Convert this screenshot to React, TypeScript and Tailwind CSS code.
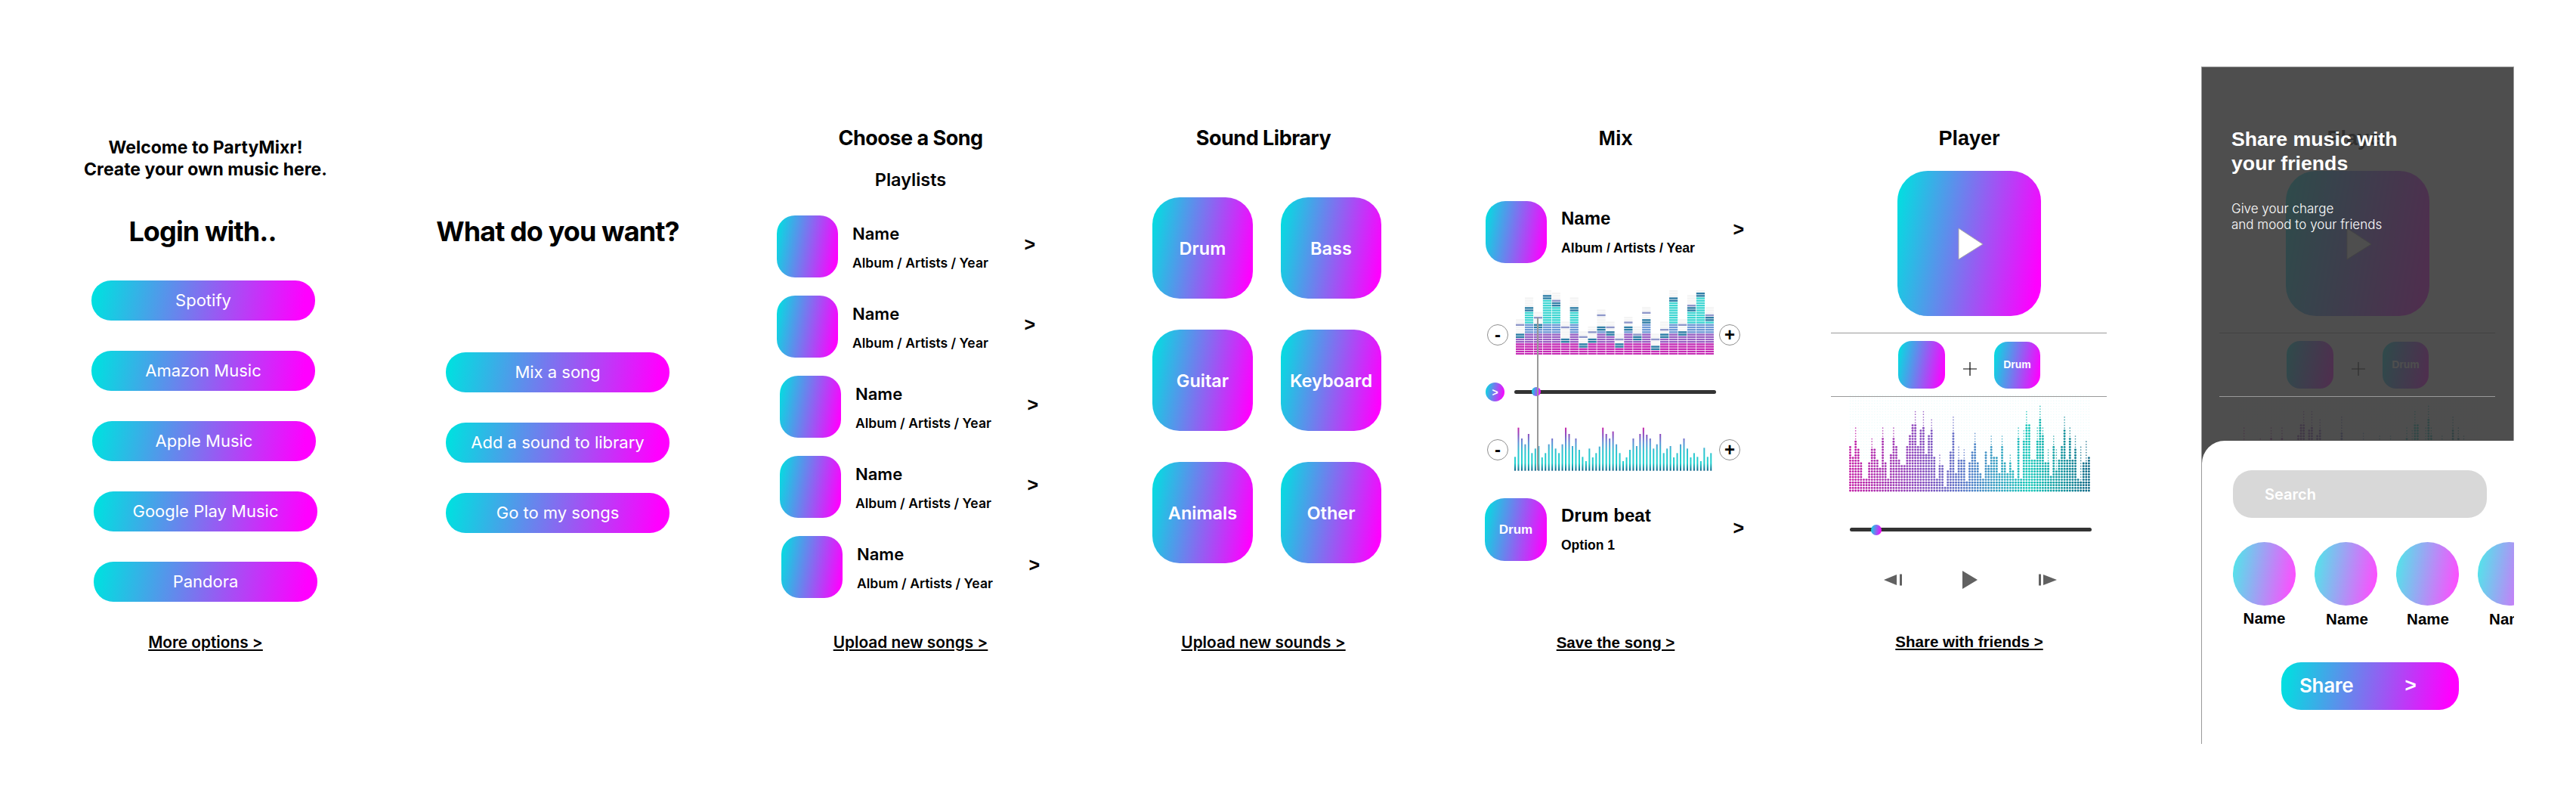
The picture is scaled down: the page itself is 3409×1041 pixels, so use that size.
import React from 'react';

// Shared brand gradient
const grad = 'bg-linear-[100deg] from-[#00e0e0] from-[2%] to-[#ff00ff] to-[94%]';
const helv = "font-['Liberation_Sans',Arial,sans-serif]";

const LoginButton = ({ label, left, top }: { label: string; left: string; top: string }) => (
  <div className={`${left} ${top} ${grad} flex h-[53px] w-[296px] items-center justify-center self-start rounded-[26px] text-[22px] text-white`}>
    {label}
  </div>
);

const FootLink = ({ label, top, cls = 'text-[20.8px] font-semibold' }: { label: string; top: string; cls?: string }) => (
  <div className={`${top} h-[24px] leading-[24px] underline underline-offset-2 ${cls}`}>{label}</div>
);

const Title = ({ label }: { label: string }) => (
  <h1 className="mt-[166px] h-[34px] text-[27px] leading-[34px] font-bold tracking-[-0.5px]">{label}</h1>
);

const Arrow = ({ cls = '' }: { cls?: string }) => (
  <span className={`${helv} text-[25px] leading-none font-bold ${cls}`}>&gt;</span>
);

// One song row of the playlist
const SongRow = ({ left, top }: { left: string; top: string }) => (
  <div className={`${left} ${top} flex h-[82px] w-[342px] self-start`}>
    <div className={`${grad} h-[82px] w-[81px] shrink-0 rounded-[24px]`} />
    <div className="ml-[19px] pt-[10px]">
      <div className="h-[28px] text-[22px] leading-[28px] font-semibold">Name</div>
      <div className="mt-[15px] h-[20px] text-[17.5px] leading-[20px] font-semibold whitespace-nowrap">Album / Artists / Year</div>
    </div>
    <Arrow cls="ml-auto mt-[26px]" />
  </div>
);

const SoundTile = ({ label }: { label: string }) => (
  <div className={`${grad} flex h-[134px] w-[133px] items-center justify-center rounded-[36px] pt-[2px] text-[23.5px] font-semibold text-white`}>
    {label}
  </div>
);

const RoundBtn = ({ label, cls }: { label: string; cls: string }) => (
  <div className={`${cls} flex h-[28px] w-[28px] shrink-0 items-center justify-center rounded-full border border-[#8f8f8f] text-[24px] leading-none font-bold`}>
    {label}
  </div>
);

// [solid bar top, peak dash top] in px from the top of the drawing
const eqBars: [number, number][] = [
  [56, 46], [23, 23], [44, 37], [6, 6], [15, 15], [63, 50], [23, 23], [71, 63], [63, 56], [47, 34],
  [55, 50], [71, 66], [47, 42], [60, 58], [37, 29], [74, 66], [56, 53], [10, 10], [55, 45], [21, 21], [3, 3], [34, 34],
];

const Equalizer = () => (
  <svg width="262" height="86" className="shrink-0">
    {eqBars.map(([top, peak], i) => {
      const x = i * 11.94;
      const rows = [];
      for (let y = 84; y >= 0; y -= 3.2) {
        const t = (84 - y) / 84;
        const on = y >= top;
        let fill = '#f4f4f4';
        if (on) {
          if (y < top + 6) fill = '#2f7ea6';
          else if (t < 0.18) fill = '#c52cb5';
          else if (t < 0.32) fill = '#9a62c4';
          else if (t < 0.48) fill = '#6f9ad6';
          else fill = '#3fd6d2';
        } else if (Math.abs(y - peak) < 1.7) fill = '#8e97c9';
        else if (y < top - 14 && y < peak - 8) continue;
        rows.push(<rect key={y} x={x} y={y} width="11.2" height="2.4" fill={fill} />);
      }
      return <g key={i}>{rows}</g>;
    })}
  </svg>
);

const waveTops = [
  313, 197, 240, 263, 222, 298, 280, 270, 315, 298, 263, 240, 280, 298, 263, 197, 222, 270, 240, 285,
  313, 330, 280, 315, 298, 272, 197, 222, 240, 212, 263, 298, 330, 315, 285, 240, 270, 222, 197, 225,
  240, 280, 263, 222, 298, 280, 270, 315, 298, 263, 240, 280, 315, 298, 313, 330, 277, 313, 298,
];

const Waveform = () => (
  <svg width="263" height="58" className="shrink-0">
    <defs>
      <linearGradient id="wave" gradientUnits="userSpaceOnUse" x1="0" y1="58" x2="0" y2="0">
        <stop offset="0" stopColor="#0b5f85" />
        <stop offset="0.18" stopColor="#1fd2cf" />
        <stop offset="0.45" stopColor="#2fc4d0" />
        <stop offset="0.65" stopColor="#5f8fd6" />
        <stop offset="0.82" stopColor="#8a4fc0" />
        <stop offset="1" stopColor="#cc20a8" />
      </linearGradient>
    </defs>
    {waveTops.map((y, i) => (
      <rect key={i} x={i * 4.47} y={(y - 195) / 3} width="2" height={(368 - y) / 3} fill="url(#wave)" />
    ))}
  </svg>
);

// Solid column tops and the sparser tips above them, in zoomed reference units
const dotSolid = [
  275, 318, 250, 285, 340, 397, 397, 340, 285, 285, 320, 360, 240, 340, 400, 300, 240, 275, 320, 350, 350, 275, 230, 185,
  185, 275, 205, 195, 300, 230, 205, 310, 400, 350, 350, 430, 365, 295, 220, 375, 320, 320, 320, 405, 340, 295, 262, 340,
  375, 400, 295, 350, 275, 308, 308, 375, 275, 340, 375, 330, 365, 395, 240, 400, 250, 185, 185, 320, 320, 250, 165, 230,
  340, 340, 385, 275, 365, 320, 275, 205, 320, 240, 320, 285, 400, 405, 330, 340, 308,
];
const dotTips: Record<number, number> = {
  2: 195, 8: 240, 12: 195, 16: 195, 24: 130, 27: 130, 30: 163, 33: 297, 38: 150, 40: 265, 42: 285, 46: 220, 52: 230,
  56: 230, 59: 297, 62: 195, 64: 205, 65: 130, 69: 195, 70: 105, 71: 195, 73: 285, 75: 230, 76: 280, 79: 150, 81: 195,
  83: 230, 85: 275, 87: 252,
};
const dotStops: [number, number[]][] = [
  [0, [195, 30, 165]], [0.3, [135, 75, 190]], [0.5, [80, 125, 200]], [0.75, [20, 200, 185]], [1, [15, 105, 135]],
];
const dotColor = (t: number) => {
  let k = 0;
  while (k < dotStops.length - 2 && t > dotStops[k + 1][0]) k++;
  const [a, ca] = dotStops[k];
  const [b, cb] = dotStops[k + 1];
  const f = (t - a) / (b - a);
  return `rgb(${ca.map((c, n) => Math.round(c + (cb[n] - c) * f)).join(',')})`;
};

const DotMeter = () => (
  <svg width="320" height="131" className="ml-[37px] -mt-[5px] self-start">
    {dotSolid.map((solid, i) => {
      const x = 1.5 + i * 3.59;
      const color = dotColor(i / 88);
      const tip = dotTips[i] ?? solid;
      const dots = [];
      for (let r = 0; r < 36; r++) {
        const y = 129 - r * 3.6;
        const zoomY = 448 - r * 10.8;
        if (zoomY >= solid) dots.push(<circle key={r} cx={x} cy={y} r="1.45" fill={color} />);
        else if (zoomY >= tip) dots.push(<circle key={r} cx={x} cy={y} r="0.85" fill={color} opacity="0.8" />);
        else dots.push(<circle key={r} cx={x} cy={y} r="0.7" fill="#dcfafa" opacity="0.6" />);
      }
      return <g key={i}>{dots}</g>;
    })}
  </svg>
);

const Knob = ({ cls }: { cls: string }) => (
  <div className={`${cls} ${grad} absolute rounded-full`} />
);

// Player screen, also drawn dimmed behind the share sheet
const PlayerScreen = () => (
  <div className={`${helv} flex w-[392px] shrink-0 flex-col items-center`}>
    <h1 className="mt-[166px] h-[34px] text-[27px] leading-[34px] font-bold">Player</h1>
    <div className={`${grad} mt-[26px] flex h-[192px] w-[190px] items-center justify-center rounded-[40px]`}>
      <svg width="34" height="43" viewBox="0 0 34 43" className="ml-[4px]">
        <path d="M1 1 L33 22 L1 42 Z" fill="#fff" stroke="#a8a8a8" strokeWidth="1" />
      </svg>
    </div>
    <div className="mt-[22px] ml-[-1px] h-px w-[365px] bg-[#999]" />
    <div className="mt-[10px] ml-[102px] flex h-[63px] items-end self-start">
      <div className={`${grad} h-[63px] w-[62px] rounded-[18px]`} />
      <svg width="18" height="18" className="mb-[17px] ml-[24px]">
        <path d="M9 0 V18 M0 9 H18" stroke="#000" strokeWidth="1.2" />
      </svg>
      <div className={`${grad} ml-[23px] flex h-[62px] w-[61px] justify-center rounded-[18px] pt-[20px] text-[14px] leading-[20px] font-bold text-white`}>
        Drum
      </div>
    </div>
    <div className="z-10 mt-[10px] ml-[-1px] h-px w-[365px] bg-[#999]" />
    <DotMeter />
    <div className="relative mt-[43px] ml-[38px] h-[14px] w-[320px] self-start">
      <div className="absolute top-[4px] h-[5px] w-full rounded-full bg-[#333]" />
      <Knob cls="left-[28px] top-0 h-[14px] w-[14px]" />
    </div>
    <div className="mt-[47px] ml-[83px] flex h-[24px] items-center self-start text-[#616161]">
      <svg width="24" height="16" viewBox="0 0 24 16">
        <path d="M0 8 L17 1 V15 Z M21 0.5 H24 V15.5 H21 Z" fill="currentColor" />
      </svg>
      <svg width="20" height="24" viewBox="0 0 20 24" className="ml-[80px]">
        <path d="M0 0 L20 12 L0 24 Z" fill="currentColor" />
      </svg>
      <svg width="24" height="16" viewBox="0 0 24 16" className="ml-[81px]">
        <path d="M0 0.5 H3 V15.5 H0 Z M6 1 L24 8 L6 15 Z" fill="currentColor" />
      </svg>
    </div>
    <FootLink label="Share with friends >" top="mt-[58px]" cls="text-[20.5px] font-bold" />
  </div>
);

const Friend = ({ shift }: { shift: string }) => (
  <div className="flex w-[83px] shrink-0 flex-col items-center">
    <div className={`${grad} h-[84px] w-[83px] rounded-full opacity-70`} />
    <div className={`${shift} h-[24px] text-[20.5px] leading-[24px] font-bold whitespace-nowrap`}>Name</div>
  </div>
);

export default function App() {
  return (
    <div className="flex h-[1041px] w-[3409px] overflow-hidden bg-white font-['Inter',sans-serif] text-black">
      {/* Login */}
      <div className="flex w-[544px] shrink-0 flex-col items-center">
        <div className="mt-[181px] text-center text-[23px] leading-[29px] font-bold">
          Welcome to PartyMixr!
          <br />
          Create your own music here.
        </div>
        <h1 className="mt-[44px] h-[46px] -translate-x-[4px] text-[36px] leading-[46px] font-bold tracking-[-0.9px]">Login with..</h1>
        <LoginButton label="Spotify" left="ml-[121px]" top="mt-[42px]" />
        <LoginButton label="Amazon Music" left="ml-[121px]" top="mt-[40px]" />
        <LoginButton label="Apple Music" left="ml-[122px]" top="mt-[40px]" />
        <LoginButton label="Google Play Music" left="ml-[124px]" top="mt-[40px]" />
        <LoginButton label="Pandora" left="ml-[124px]" top="mt-[40px]" />
        <FootLink label="More options >" top="mt-[42px]" />
      </div>

      {/* What do you want */}
      <div className="flex w-[388px] shrink-0 flex-col items-center">
        <h1 className="mt-[283px] h-[46px] text-[36px] leading-[46px] font-bold tracking-[-0.9px] whitespace-nowrap">What do you want?</h1>
        <LoginButton label="Mix a song" left="ml-[46px]" top="mt-[137px]" />
        <LoginButton label="Add a sound to library" left="ml-[46px]" top="mt-[40px]" />
        <LoginButton label="Go to my songs" left="ml-[46px]" top="mt-[40px]" />
      </div>

      {/* Choose a song */}
      <div className="flex w-[546px] shrink-0 flex-col items-center">
        <Title label="Choose a Song" />
        <div className="mt-[23px] h-[30px] text-[23.5px] leading-[30px] font-semibold">Playlists</div>
        <SongRow left="ml-[96px]" top="mt-[32px]" />
        <SongRow left="ml-[96px]" top="mt-[24px]" />
        <SongRow left="ml-[100px]" top="mt-[24px]" />
        <SongRow left="ml-[100px]" top="mt-[24px]" />
        <SongRow left="ml-[102px]" top="mt-[24px]" />
        <FootLink label="Upload new songs >" top="mt-[47px]" />
      </div>

      {/* Sound library */}
      <div className="flex w-[388px] shrink-0 flex-col items-center">
        <Title label="Sound Library" />
        <div className="mt-[61px] ml-[47px] grid grid-cols-[133px_133px] gap-x-[37px] gap-y-[41px] self-start">
          {['Drum', 'Bass', 'Guitar', 'Keyboard', 'Animals', 'Other'].map((s) => (
            <SoundTile key={s} label={s} />
          ))}
        </div>
        <FootLink label="Upload new sounds >" top="mt-[93px]" />
      </div>

      {/* Mix */}
      <div className={`${helv} relative flex w-[544px] shrink-0 flex-col items-center`}>
        <h1 className="mt-[166px] h-[34px] text-[27px] leading-[34px] font-bold">Mix</h1>
        <div className="mt-[66px] ml-[100px] flex h-[82px] w-[342px] self-start">
          <div className={`${grad} h-[82px] w-[81px] shrink-0 rounded-[26px]`} />
          <div className="ml-[19px] pt-[9px]">
            <div className="h-[28px] text-[24px] leading-[28px] font-bold">Name</div>
            <div className="mt-[15px] h-[20px] text-[17.7px] leading-[20px] font-bold whitespace-nowrap">Album / Artists / Year</div>
          </div>
          <Arrow cls="ml-auto mt-[25px]" />
        </div>
        <div className="mt-[35px] ml-[102px] flex items-end self-start">
          <RoundBtn label="-" cls="mb-[12px]" />
          <div className="ml-[10px]"><Equalizer /></div>
          <RoundBtn label="+" cls="mb-[12px] ml-[7px]" />
        </div>
        <div className="mt-[37px] ml-[100px] flex h-[25px] items-center self-start">
          <div className={`${grad} flex h-[25px] w-[25px] items-center justify-center rounded-full text-[14px] leading-none font-bold text-white`}>&gt;</div>
          <div className="relative ml-[13px] h-[5px] w-[267px] rounded-full bg-[#333]">
            <Knob cls="left-[23px] -top-[4px] h-[12px] w-[12px]" />
          </div>
        </div>
        <div className="mt-[34px] ml-[102px] flex items-end self-start">
          <RoundBtn label="-" cls="mb-[14px]" />
          <div className="ml-[8px]"><Waveform /></div>
          <RoundBtn label="+" cls="mb-[14px] ml-[8px]" />
        </div>
        <div className="mt-[36px] ml-[99px] flex h-[83px] w-[343px] self-start">
          <div className={`${grad} flex h-[83px] w-[82px] shrink-0 items-center justify-center rounded-[26px] text-[17px] font-bold text-white`}>Drum</div>
          <div className="ml-[19px] pt-[9px]">
            <div className="h-[28px] text-[24px] leading-[28px] font-bold whitespace-nowrap">Drum beat</div>
            <div className="mt-[15px] h-[20px] text-[17.5px] leading-[20px] font-bold">Option 1</div>
          </div>
          <Arrow cls="ml-auto mt-[27px]" />
        </div>
        <FootLink label="Save the song >" top="mt-[96px]" cls="text-[20.5px] font-bold" />
        {/* Playhead across both tracks */}
        <div className="absolute top-[420px] left-[168px] h-[202px] w-[1.5px] bg-[#999]" />
      </div>

      <PlayerScreen />

      {/* Share sheet */}
      <div className={`${helv} mt-[88px] ml-[111px] flex h-[896px] w-[414px] shrink-0 flex-col border-l border-[#999]`}>
        <div className="relative h-[525px] shrink-0 overflow-hidden border-t border-r border-[#999]">
          <div className="absolute top-[-89px] left-[10px]">
            <PlayerScreen />
          </div>
          <div className="absolute inset-0 bg-[#353535]/88" />
          <div className="relative pt-[79px] pl-[39px] text-white">
            <div className="text-[26.7px] leading-[32px] font-bold">
              Share music with
              <br />
              your friends
            </div>
            <div className="mt-[34px] font-['Inter',sans-serif] text-[17px] leading-[21px] font-light">
              Give your charge
              <br />
              and mood to your friends
            </div>
          </div>
        </div>
        <div className="relative -mt-[30px] flex-1 overflow-hidden rounded-tl-[30px] bg-white">
          <div className="mt-[39px] ml-[41px] flex h-[63px] w-[336px] items-center rounded-[25px] bg-[#d8d8d8] pl-[42px] font-['Inter',sans-serif] text-[20px] font-semibold text-white">
            Search
          </div>
          <div className="mt-[32px] ml-[41px] flex gap-x-[25px]">
            <Friend shift="mt-[5px]" />
            <Friend shift="mt-[6px] ml-[3px]" />
            <Friend shift="mt-[6px] ml-[1px]" />
            <Friend shift="mt-[6px] ml-[3px]" />
          </div>
          <div className={`${grad} mt-[45px] ml-[105px] flex h-[63px] w-[235px] items-center rounded-[26px] pb-[2px] font-['Inter',sans-serif] font-semibold text-white`}>
            <span className="ml-[24px] text-[26px] tracking-[-0.3px]">Share</span>
            <span className={`${helv} ml-[68px] text-[26px] font-bold`}>&gt;</span>
          </div>
        </div>
      </div>
    </div>
  );
}
